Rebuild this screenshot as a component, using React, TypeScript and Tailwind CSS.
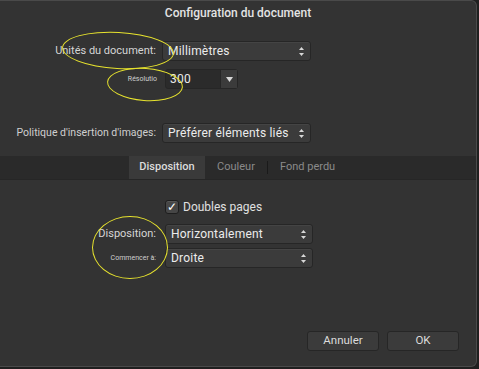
import React from "react";

const font = { fontFamily: "Roboto, 'Liberation Sans', sans-serif" };

const Stepper = () => (
  <svg width="7" height="11" viewBox="0 0 7 11" className="shrink-0">
    <path d="M3.5 1 L6 4 L1 4 Z" fill="#d8d8d8" />
    <path d="M3.5 10 L6 7 L1 7 Z" fill="#d8d8d8" />
  </svg>
);

const Select: React.FC<{ value: string; w: string }> = ({ value, w }) => (
  <div
    className={`flex h-[20px] ${w} items-center justify-between whitespace-nowrap rounded-[3px] border border-[#262626] bg-[#3b3b3b] pl-[5px] pr-[5px] text-[12px] tracking-[0.2px] text-[#ececec] shadow-[inset_0_1px_0_#444444]`}
  >
    <span>{value}</span>
    <Stepper />
  </div>
);

const Label: React.FC<{ children: React.ReactNode; small?: boolean }> = ({ children, small }) => (
  <div
    className={`w-[158px] shrink-0 whitespace-nowrap pr-[2px] text-right ${
      small ? "text-[7px] text-[#cfcfcf]" : "text-[11px] text-[#d6d6d6]"
    }`}
  >
    {children}
  </div>
);

const Ellipse: React.FC<{ cls: string }> = ({ cls }) => (
  <div className={`pointer-events-none absolute rounded-[50%] border border-[#e6e22e] ${cls}`} />
);

export default function App() {
  return (
    <div className="relative h-[369px] w-[479px] overflow-hidden bg-[#1f1f1f]" style={font}>
      <div className="flex h-[367px] w-[477px] flex-col rounded-br-[6px] rounded-tr-[6px] border-t border-r border-b border-[#4a4a4a] bg-[#333333]">
        <div className="pt-[4px] text-center text-[12px] font-medium leading-[16px] text-[#e4e4e4]">
          Configuration du document
        </div>

        <div className="mt-[20px] flex items-center">
          <Label>Unités du document:</Label>
          <div className="ml-[4px]">
            <Select value="Millimètres" w="w-[149px]" />
          </div>
        </div>

        <div className="mt-[8px] flex items-start">
          <div className="w-[158px] shrink-0 pt-[5px] pr-[1px] text-right text-[7px] text-[#cfcfcf]">
            Résolutio
          </div>
          <div className="ml-[7px] flex h-[20px] w-[73px] items-center rounded-[3px] border border-[#262626] bg-[#2b2b2b] text-[12px] tracking-[0.2px] text-[#ececec]">
            <span className="flex-1 pl-[4px]">300</span>
            <div className="flex h-full w-[17px] items-center justify-center border-l border-[#262626] bg-[#3b3b3b]">
              <svg width="7" height="5" viewBox="0 0 7 5">
                <path d="M0 0 L7 0 L3.5 5 Z" fill="#d8d8d8" />
              </svg>
            </div>
          </div>
        </div>

        <div className="mt-[34px] flex items-center">
          <div className="w-[158px] shrink-0 whitespace-nowrap pr-[2px] text-right text-[10.5px] text-[#cfcfcf]">
            Politique d'insertion d'images:
          </div>
          <div className="ml-[4px]">
            <Select value="Préférer éléments liés" w="w-[149px]" />
          </div>
        </div>

        <div className="mt-[13px] flex h-[24px] items-stretch border-b border-[#262626] bg-[#2a2a2a] text-[11px]">
          <div className="w-[129px]" />
          <div className="flex w-[76px] items-center justify-center bg-[#3a3a3a] font-medium text-[#dcdcdc]">
            Disposition
          </div>
          <div className="flex w-[62px] items-center justify-center text-[#8a8a8a]">Couleur</div>
          <div className="my-[5px] w-px bg-[#1a1a1a]" />
          <div className="flex items-center pl-[12px] text-[#8a8a8a]">Fond perdu</div>
        </div>

        <div className="mt-[18px] flex items-center pl-[165px]">
          <div className="flex h-[14px] w-[14px] items-center justify-center rounded-[3px] border border-[#1e1e1e] bg-[#464646] text-[12px] leading-none text-white shadow-[inset_0_1px_0_#555555]">
            ✓
          </div>
          <span className="ml-[4px] text-[12px] text-[#e0e0e0]">Doubles pages</span>
        </div>

        <div className="mt-[8px] flex items-center">
          <Label>Disposition:</Label>
          <div className="ml-[7px]">
            <Select value="Horizontalement" w="w-[148px]" />
          </div>
        </div>

        <div className="mt-[4px] flex items-center">
          <Label small>Commencer à:</Label>
          <div className="ml-[7px]">
            <Select value="Droite" w="w-[148px]" />
          </div>
        </div>

        <div className="mt-auto mb-[15px] flex justify-end gap-[8px] pr-[17px]">
          <div className="flex h-[20px] w-[72px] items-center justify-center rounded-[3px] border border-[#262626] bg-[#3b3b3b] text-[11.5px] text-[#dcdcdc]">
            Annuler
          </div>
          <div className="flex h-[20px] w-[72px] items-center justify-center rounded-[3px] border border-[#262626] bg-[#3b3b3b] text-[11.5px] text-[#dcdcdc]">
            OK
          </div>
        </div>
      </div>

      <Ellipse cls="left-[62px] top-[32px] h-[37px] w-[112px] rotate-[3deg]" />
      <Ellipse cls="left-[107px] top-[68px] h-[33px] w-[76px] rotate-[4deg]" />
      <Ellipse cls="left-[92px] top-[216px] h-[63px] w-[76px]" />
    </div>
  );
}
